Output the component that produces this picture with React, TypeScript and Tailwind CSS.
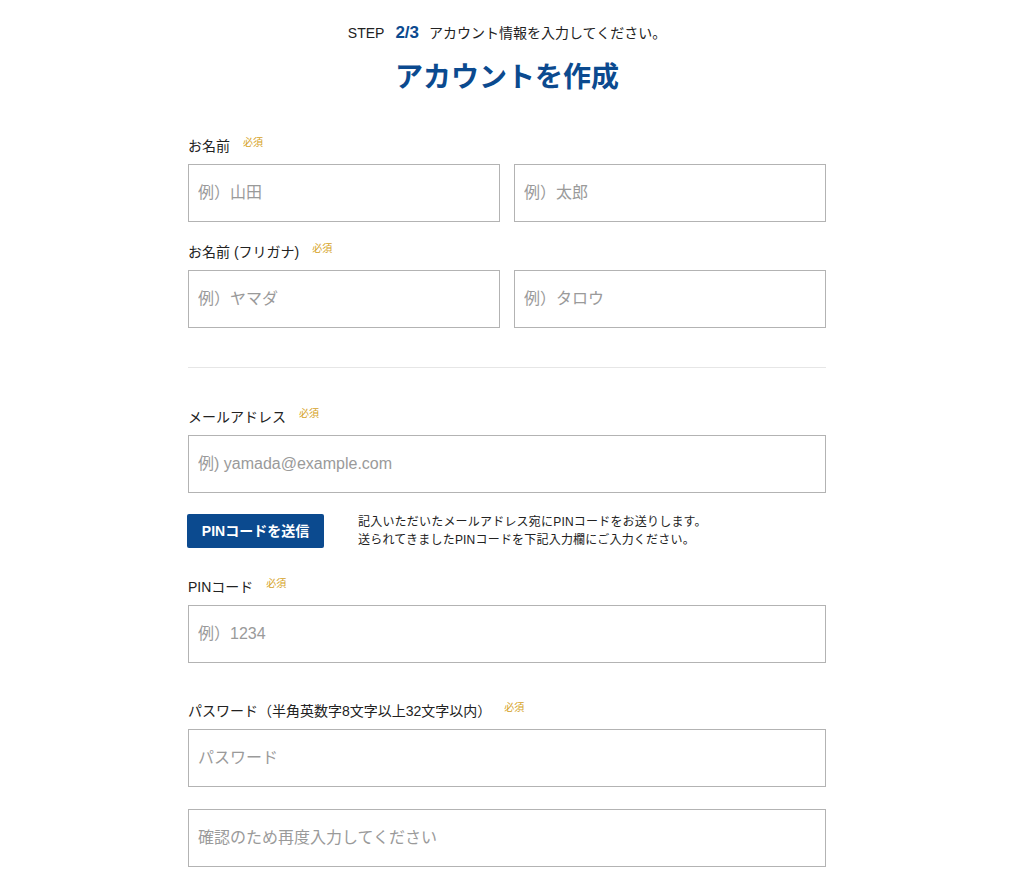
import React from "react";

const font = { fontFamily: '"Liberation Sans", "Noto Sans CJK JP", sans-serif' };

function Label({ children, className = "" }: { children: React.ReactNode; className?: string }) {
  return (
    <div className={"flex items-start h-[18px] mb-[9px] " + className}>
      <span className="text-[14px] leading-[18px] text-[#222]">{children}</span>
      <span className="ml-[13px] mt-0 text-[10px] leading-[12px] text-[#d5a21e]">必須</span>
    </div>
  );
}

function Field({ placeholder, type = "text" }: { placeholder: string; type?: string }) {
  return (
    <input
      type={type}
      placeholder={placeholder}
      className="block w-full h-[58px] border border-[#b3b3b3] bg-white px-[9px] text-[16px] text-[#333] placeholder:text-[#9a9a9a] outline-none"
      style={font}
    />
  );
}

export default function App() {
  return (
    <div className="min-h-[880px] bg-white pt-[24px]" style={font}>
      <div className="flex items-center justify-center text-[14px] text-[#222] leading-[18px]">
        <span>STEP</span>
        <span className="ml-[11px] mr-[10px] text-[17px] font-bold text-[#0b4a8f]">2/3</span>
        <span>アカウント情報を入力してください。</span>
      </div>
      <h1 className="mt-[18px] text-center text-[28px] leading-[36px] font-bold text-[#0b4a8f]">アカウントを作成</h1>

      <form className="mx-auto w-[638px] mt-[41px]">
        <Label>お名前</Label>
        <div className="flex gap-[14px]">
          <Field placeholder="例）山田" />
          <Field placeholder="例）太郎" />
        </div>

        <Label className="mt-[21px]">お名前 (フリガナ)</Label>
        <div className="flex gap-[14px]">
          <Field placeholder="例）ヤマダ" />
          <Field placeholder="例）タロウ" />
        </div>

        <div className="mt-[39px] h-px bg-[#e6e6e6]" />

        <Label className="mt-[40px]">メールアドレス</Label>
        <Field placeholder="例) yamada@example.com" type="email" />

        <div className="mt-[21px] h-[34px] flex items-center">
          <button
            type="button"
            className="ml-[-1px] shrink-0 w-[137px] h-[34px] rounded-[2px] bg-[#0b4a8f] text-white text-[14px] font-bold"
          >
            PINコードを送信
          </button>
          <p className="ml-[34px] text-[12px] leading-[18px] tracking-[0.2px] text-[#222]">
            記入いただいたメールアドレス宛にPINコードをお送りします。
            <br />
            送られてきましたPINコードを下記入力欄にご入力ください。
          </p>
        </div>

        <Label className="mt-[30px]">PINコード</Label>
        <Field placeholder="例）1234" />

        <Label className="mt-[39px]">パスワード（半角英数字8文字以上32文字以内）</Label>
        <Field placeholder="パスワード" type="password" />
        <div className="mt-[22px]">
          <Field placeholder="確認のため再度入力してください" type="password" />
        </div>
      </form>
    </div>
  );
}
